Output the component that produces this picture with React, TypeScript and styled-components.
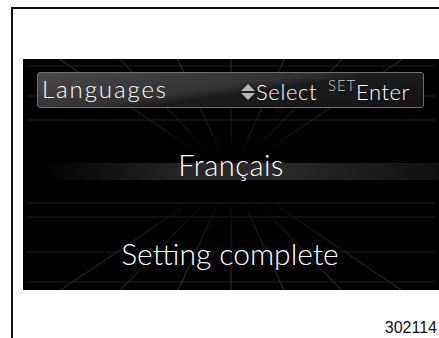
import styled, { createGlobalStyle } from 'styled-components'

const GlobalStyle = createGlobalStyle`
  html, body {
    margin: 0;
    padding: 0;
    background: #fff;
    overflow: hidden;
  }
  body {
    width: 439px;
    height: 338px;
  }
`

const rays = [-1.48, -0.96, -0.46, 0, 0.46, 0.96, 1.48]
const hLines = [7, 37, 61, 144, 158, 193, 223]

const Grid = (): JSX.Element => (
  <GridSvg viewBox='0 0 416 231' preserveAspectRatio='none'>
    <defs>
      <linearGradient id='rayFade' gradientUnits='userSpaceOnUse' x1='0' y1='0' x2='0' y2='231'>
        <stop offset='0' stopColor='#303030' />
        <stop offset='0.3' stopColor='#1c1c1c' />
        <stop offset='0.42' stopColor='#000' />
        <stop offset='0.58' stopColor='#000' />
        <stop offset='0.74' stopColor='#1c1c1c' />
        <stop offset='1' stopColor='#303030' />
      </linearGradient>
    </defs>
    {hLines.map(y => (
      <line key={'h' + y} x1={4} y1={y} x2={412} y2={y} stroke='#1c1c1c' strokeWidth={1} />
    ))}
    {rays.map(k => (
      <g key={'r' + k}>
        <line x1={208} y1={116} x2={208 + k * 116} y2={0} stroke='url(#rayFade)' strokeWidth={1} />
        <line x1={208} y1={116} x2={208 + k * 115} y2={231} stroke='url(#rayFade)' strokeWidth={1} />
      </g>
    ))}
  </GridSvg>
)

export default function App (): JSX.Element {
  return (<>
    <GlobalStyle />
    <Page>
      <Screen>
        <Grid />
        <HeaderBar>
          <Title>Languages</Title>
          <Hints>
            <Arrows>
              <svg width='14' height='17' viewBox='0 0 14 17'>
                <polygon points='7,0 14,7 0,7' fill='#b8b8b8' />
                <polygon points='0,9 14,9 7,16' fill='#b8b8b8' />
              </svg>
            </Arrows>
            <HintText>Select</HintText>
            <SetLabel>SET</SetLabel>
            <HintText>Enter</HintText>
          </Hints>
        </HeaderBar>
        <Selected>Français</Selected>
        <Status>Setting complete</Status>
      </Screen>
      <Figure>302114</Figure>
    </Page>
  </>)
}

const Page = styled.div`
  margin: 7px 0 0 11px;
  height: 331px;
  border-top: 2px solid #111;
  border-left: 2px solid #111;
  padding: 50px 0 0 10px;
  box-sizing: border-box;
  display: flex;
  flex-direction: column;
`

const Screen = styled.div`
  position: relative;
  flex: none;
  height: 231px;
  background: #000;
  display: flex;
  flex-direction: column;
  overflow: hidden;
  font-family: Lato, "Open Sans", sans-serif;
  font-weight: 300;
  color: #fff;
`

const GridSvg = styled.svg`
  position: absolute;
  inset: 0;
  width: 100%;
  height: 100%;
`

const HeaderBar = styled.div`
  position: relative;
  margin: 13px 15px 0 14px;
  height: 36px;
  box-sizing: border-box;
  border: 1px solid #6e6e6e;
  border-radius: 3px;
  background: linear-gradient(172deg, #4a4a4a 0%, #333 45%, #1c1c1c 55%, #141414 100%);
  display: flex;
  align-items: center;
  justify-content: space-between;
  padding: 0 13px 0 4px;
`

const Title = styled.div`
  font-size: 24px;
  letter-spacing: 1.9px;
  line-height: 1;
  margin-top: -2px;
`

const Hints = styled.div`
  display: flex;
  align-items: flex-end;
  height: 100%;
  padding-bottom: 4px;
  box-sizing: border-box;
`

const Arrows = styled.div`
  display: flex;
  align-items: center;
  margin-right: 1px;
  padding-bottom: 2px;
`

const HintText = styled.span`
  font-size: 22px;
  line-height: 1;
  letter-spacing: 0.6px;
`

const SetLabel = styled.span`
  font-size: 15px;
  line-height: 1;
  color: #c8c8c8;
  align-self: flex-start;
  margin: 5px 0 0 11px;
  letter-spacing: 0.8px;
`

const Selected = styled.div`
  position: relative;
  z-index: 0;
  margin-top: 40px;
  text-align: center;
  font-size: 29px;
  line-height: 34px;
  letter-spacing: 0.5px;

  &::before {
    content: '';
    position: absolute;
    left: 20px;
    right: 0;
    top: 15px;
    height: 17px;
    background: linear-gradient(90deg, rgba(40,40,40,0) 0%, #262626 35%, #2a2a2a 60%, rgba(40,40,40,0.4) 100%);
    z-index: -1;
  }
`

const Status = styled.div`
  position: relative;
  margin-top: 53px;
  text-align: center;
  font-size: 30px;
  line-height: 36px;
  margin-right: 2px;
`

const Figure = styled.div`
  margin-top: 30px;
  text-align: right;
  padding-right: 2px;
  font-family: "Liberation Sans", Arial, sans-serif;
  font-size: 16px;
  line-height: 16px;
  color: #111;
`
